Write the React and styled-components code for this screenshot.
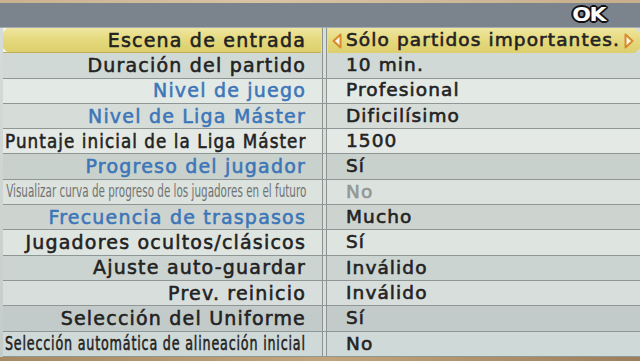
import React, { useLayoutEffect, useRef, useState } from "react";
import styled, { createGlobalStyle } from "styled-components";

const Global = createGlobalStyle`
  html, body { margin: 0; padding: 0; background: #b9a07e; }
  body { width: 640px; height: 361px; overflow: hidden; font-family: "DejaVu Sans", "Liberation Sans", sans-serif; }
  #root { width: 640px; height: 361px; }
`;

const Screen = styled.div`
  width: 640px;
  height: 361px;
  display: flex;
  flex-direction: column;
  background: #c9ced0;
`;

const TopStrip = styled.div`
  height: 3px;
  background: linear-gradient(90deg, #c9b18f, #d8c3a3 40%, #c6ae8c);
`;

const Header = styled.div`
  height: 24px;
  background: #7b838c;
  border-bottom: 1px solid #a6adb2;
  display: flex;
  align-items: center;
  justify-content: flex-end;
  padding-right: 35px;
`;

const OkMark = styled.span`
  font-family: "DejaVu Sans", sans-serif;
  font-weight: bold;
  font-size: 22px;
  letter-spacing: -1.5px;
  color: #ffffff;
  line-height: 1;
  transform: scaleY(0.88);
  text-shadow:
    -2px 0 #111, 2px 0 #111, 0 -2px #111, 0 2px #111,
    -1.5px -1.5px #111, 1.5px -1.5px #111, -1.5px 1.5px #111, 1.5px 1.5px #111;
`;

const Table = styled.div`
  height: 330px;
  display: grid;
  grid-template-rows: repeat(13, 1fr);
  padding: 0 4px 0 3px;
  background: linear-gradient(180deg, #d6dcda, #c4ccca);
`;

const Row = styled.div`
  display: grid;
  grid-template-columns: 318px 7px 1fr;
  min-height: 0;
  border-bottom: ${(p) => (p.$active ? "none" : "1.5px solid #8f9796")};
  background: ${(p) => p.$tone};
`;

const yellow = "linear-gradient(180deg, #efe6a0 0%, #e6da80 45%, #ddcf6c 100%)";

const LabelCell = styled.div`
  position: relative;
  display: flex;
  align-items: center;
  justify-content: flex-end;
  padding-right: 15px;
  white-space: nowrap;
  background: ${(p) => (p.$active ? yellow : "transparent")};
  border-bottom: ${(p) => (p.$active ? "1px solid #bfae58" : "none")};
  ${(p) =>
    p.$active &&
    `
    &::before, &::after {
      content: "";
      position: absolute;
      left: 0;
      width: 0; height: 0;
      border-style: solid;
    }
    &::before { top: 0; border-width: 4px 4px 0 0; border-color: #f4f4f0 transparent transparent transparent; }
    &::after { bottom: 0; border-width: 4px 0 0 4px; border-color: transparent transparent transparent #f4f4f0; }
  `}
`;

const LabelText = styled.span`
  display: inline-block;
  font-size: ${(p) => (p.$small ? "17.5px" : "19px")};
  font-weight: normal;
  letter-spacing: ${(p) => (p.$small ? "0" : "1.2px")};
  -webkit-text-stroke: ${(p) => (p.$small ? "0" : "0.55px")} ${(p) => p.$color};
  color: ${(p) => p.$color};
  transform-origin: right center;
  line-height: 1;
`;

const Divider = styled.div`
  border-left: 1.5px solid #8c9492;
  border-right: 1.5px solid #8c9492;
  background: #d9dedd;
  margin: 0 1px;
`;

const ValueCell = styled.div`
  display: flex;
  align-items: center;
  padding-left: ${(p) => (p.$active ? "4px" : "18px")};
  padding-right: 6px;
  white-space: nowrap;
  font-size: 18.5px;
  letter-spacing: 1.1px;
  color: ${(p) => (p.$disabled ? "#929696" : "#232323")};
  -webkit-text-stroke: 0.6px ${(p) => (p.$disabled ? "#929696" : "#232323")};
  background: ${(p) => (p.$active ? yellow : "transparent")};
  clip-path: ${(p) =>
    p.$active
      ? "polygon(0 0, calc(100% - 5px) 0, 100% 5px, 100% calc(100% - 5px), calc(100% - 5px) 100%, 0 100%)"
      : "none"};
  line-height: 1;
  gap: 4px;
`;

const ValueText = styled.span`
  flex: 1;
`;

const Arrow = ({ dir }) => (
  <svg width="10" height="16" viewBox="0 0 10 16" style={{ flex: "none" }}>
    <polygon
      points={dir === "left" ? "8.5,1.5 1.5,8 8.5,14.5" : "1.5,1.5 8.5,8 1.5,14.5"}
      fill="#fbf7ea"
      stroke="#d98a2a"
      strokeWidth="2"
      strokeLinejoin="round"
    />
  </svg>
);

const FitLabel = ({ text, color, small, fit }) => {
  const ref = useRef(null);
  const [scale, setScale] = useState(1);
  useLayoutEffect(() => {
    if (fit && ref.current) {
      const w = ref.current.offsetWidth;
      if (w > fit) setScale(fit / w);
    }
  }, [fit, text]);
  return (
    <LabelText
      ref={ref}
      $color={color}
      $small={small}
      style={scale !== 1 ? { transform: `scaleX(${scale})` } : undefined}
    >
      {text}
    </LabelText>
  );
};

const BLACK = "#222222";
const BLUE = "#3c76b8";
const GREY = "#6f7373";

const rows = [
  { label: "Escena de entrada", value: "Sólo partidos importantes.", active: true, color: BLACK },
  { label: "Duración del partido", value: "10 min.", color: BLACK, tone: "#d0d9d5" },
  { label: "Nivel de juego", value: "Profesional", color: BLUE, tone: "#e3e9e5" },
  { label: "Nivel de Liga Máster", value: "Dificilísimo", color: BLUE, tone: "#d6ddd9" },
  { label: "Puntaje inicial de la Liga Máster", value: "1500", color: BLACK, tone: "#e4e9e5", fit: 301 },
  { label: "Progreso del jugador", value: "Sí", color: BLUE, tone: "#c9d1cd" },
  {
    label: "Visualizar curva de progreso de los jugadores en el futuro",
    value: "No",
    color: GREY,
    tone: "#dce2de",
    small: true,
    fit: 300,
    disabled: true,
  },
  { label: "Frecuencia de traspasos", value: "Mucho", color: BLUE, tone: "#cdd4d0" },
  { label: "Jugadores ocultos/clásicos", value: "Sí", color: BLACK, tone: "#dee4e0" },
  { label: "Ajuste auto-guardar", value: "Inválido", color: BLACK, tone: "#ccd4d1" },
  { label: "Prev. reinicio", value: "Inválido", color: BLACK, tone: "#d7dedb" },
  { label: "Selección del Uniforme", value: "Sí", color: BLACK, tone: "#c2cbc9" },
  { label: "Selección automática de alineación inicial", value: "No", color: BLACK, tone: "#cfd9d8", fit: 301 },
];

const BottomStrip = styled.div`
  height: 4px;
  background: linear-gradient(90deg, #a88a62, #c2a47c 50%, #9c7f5a);
`;

export default function App() {
  return (
    <>
      <Global />
      <Screen>
        <TopStrip />
        <Header>
          <OkMark>OK</OkMark>
        </Header>
        <Table>
          {rows.map((r) => (
            <Row key={r.label} $active={r.active} $tone={r.active ? "transparent" : r.tone}>
              <LabelCell $active={r.active}>
                <FitLabel text={r.label} color={r.color} small={r.small} fit={r.fit} />
              </LabelCell>
              <Divider />
              <ValueCell $active={r.active} $disabled={r.disabled}>
                {r.active && <Arrow dir="left" />}
                <ValueText>{r.value}</ValueText>
                {r.active && <Arrow dir="right" />}
              </ValueCell>
            </Row>
          ))}
        </Table>
        <BottomStrip />
      </Screen>
    </>
  );
}
